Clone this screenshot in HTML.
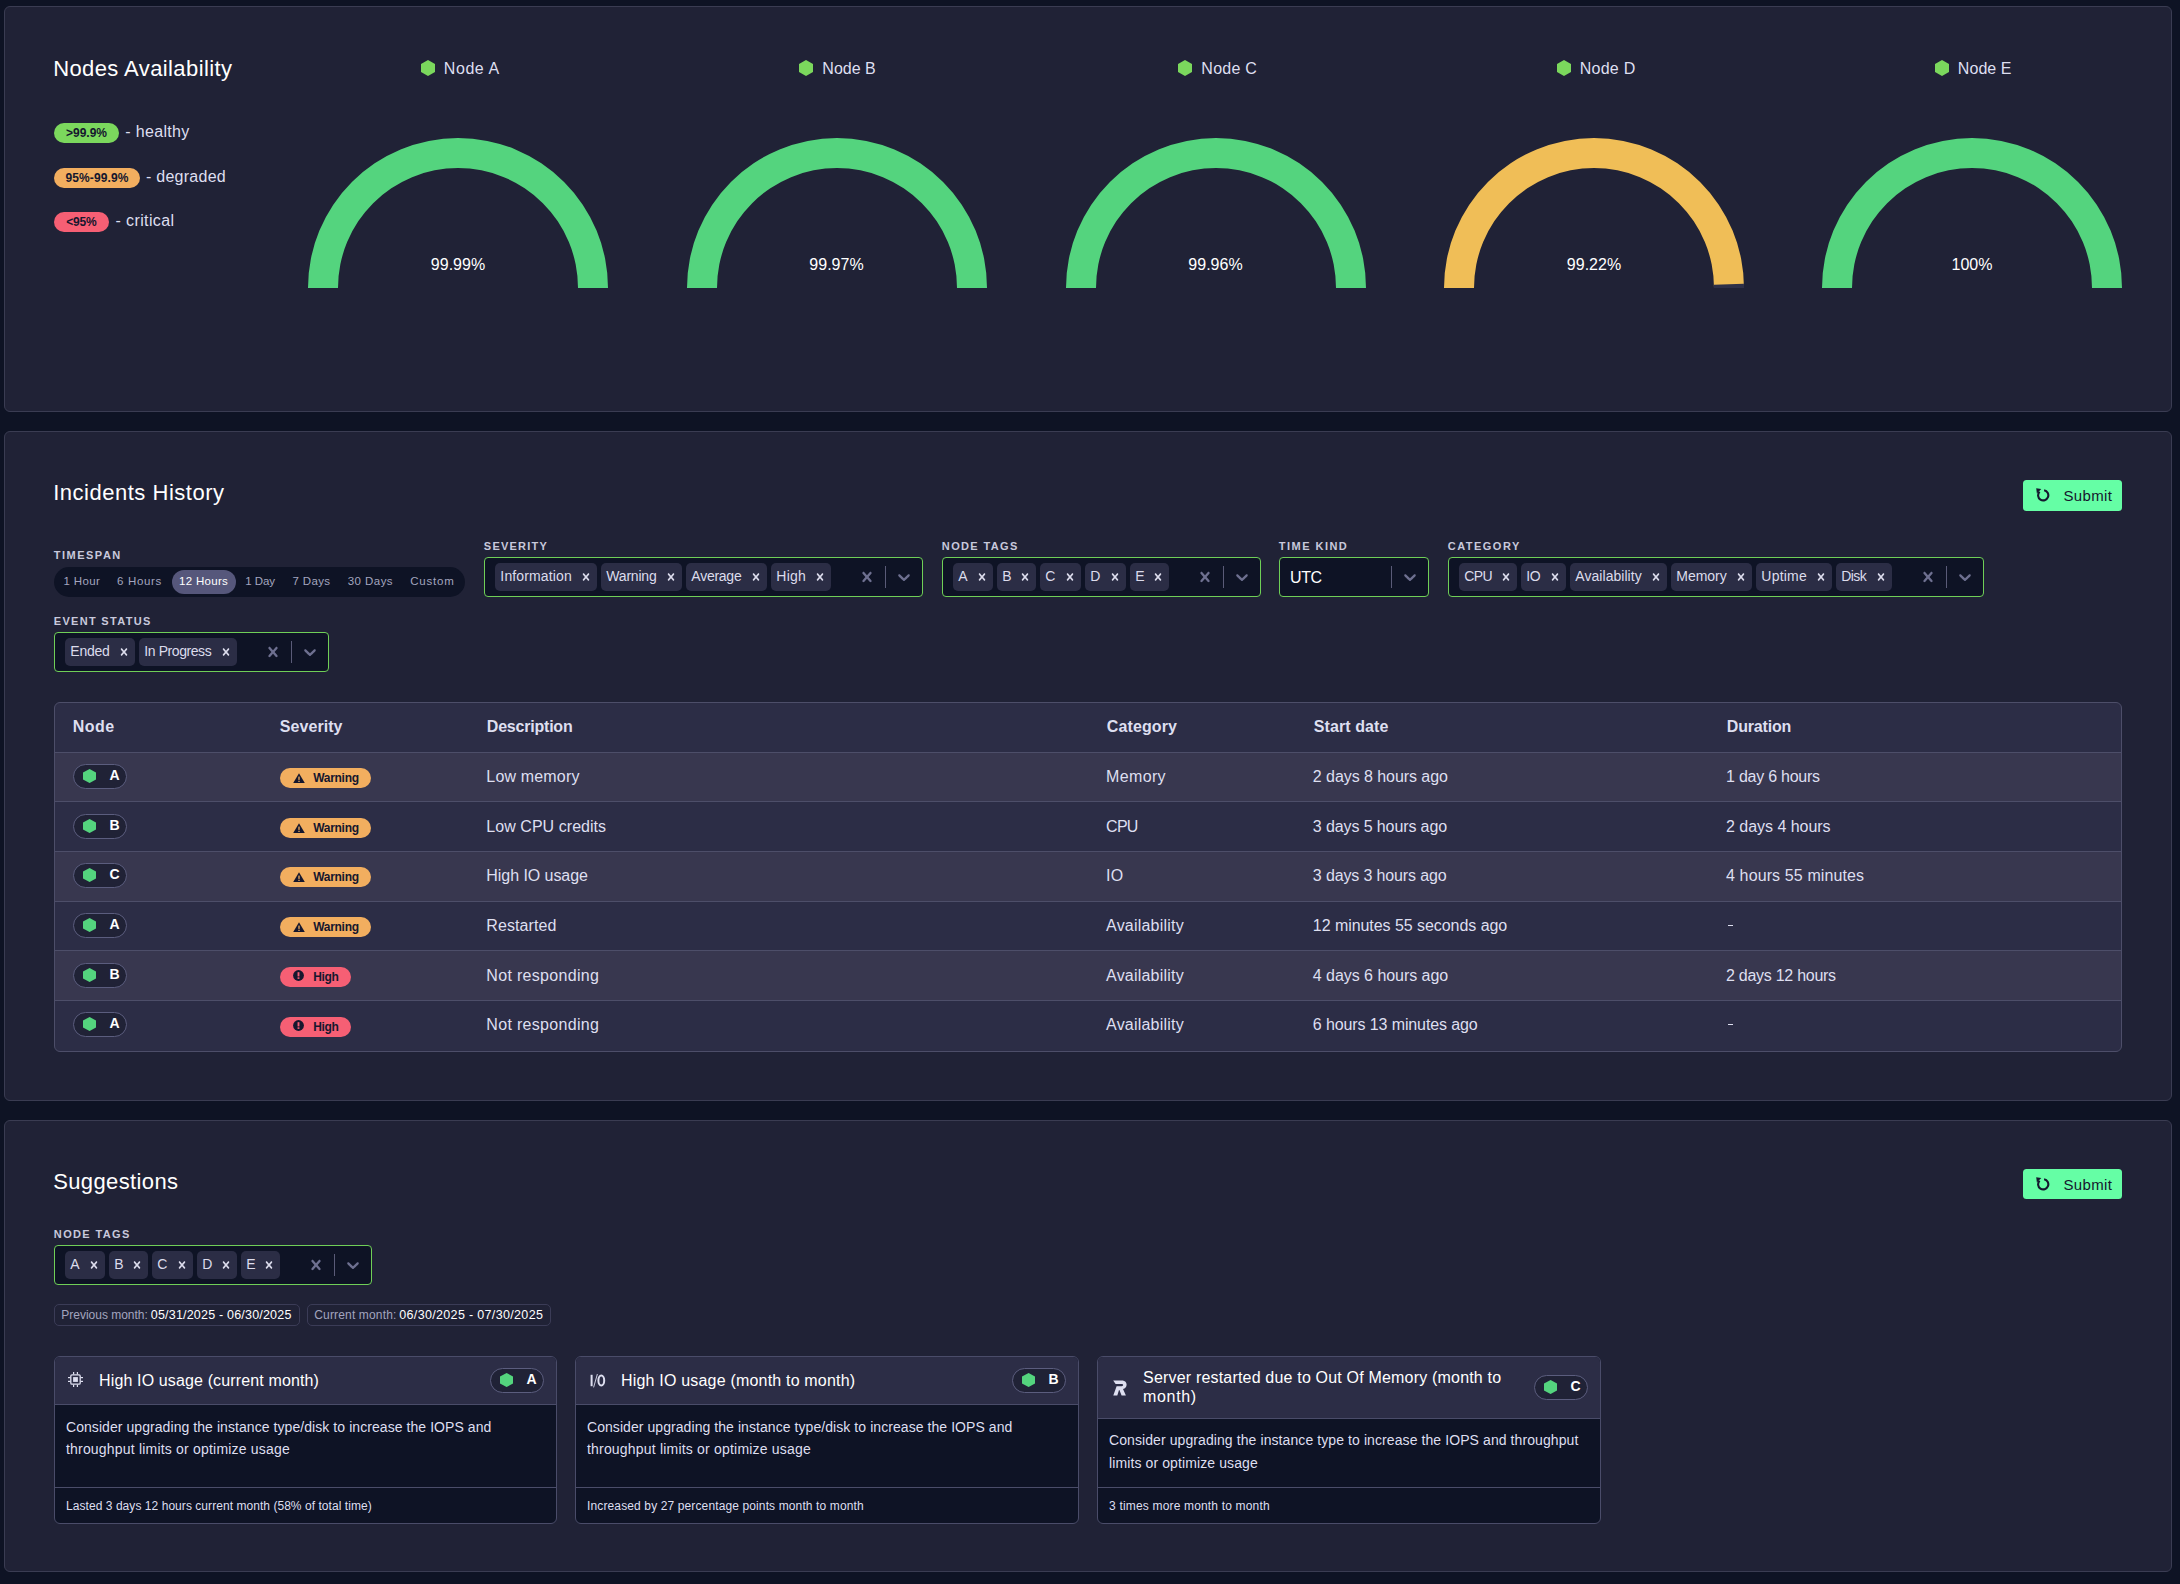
<!DOCTYPE html><html lang="en"><head><meta charset="utf-8"><title>Cluster health</title><style>
html,body{margin:0;padding:0;background:#0e1324;}
body{width:2180px;height:1584px;position:relative;overflow:hidden;font-family:"Liberation Sans", sans-serif;}
.b{position:absolute;display:block;box-sizing:border-box}
.t{position:absolute;white-space:nowrap;line-height:1;margin:0}
</style></head><body>
<section aria-label="Nodes Availability">
<div class="b" style="left:4px;top:6px;width:2168px;height:406px;background:#202236;border:1px solid #3a3c52;border-radius:6px;"></div>
<div class="b" style="left:54px;top:123px;width:65px;height:20px;background:#7bd85d;border-radius:10px;"></div>
<div class="b" style="left:54px;top:167.5px;width:86px;height:20px;background:#f2ae5f;border-radius:10px;"></div>
<div class="b" style="left:54px;top:212px;width:55px;height:20px;background:#f65f74;border-radius:10px;"></div>
<svg class="b" style="left:420.5px;top:59.5px" width="14" height="16" viewBox="0 0 14 16"><polygon points="7.00,0.00 14.00,4.00 14.00,12.00 7.00,16.00 0.00,12.00 0.00,4.00" fill="#7bd85d"/></svg>
<svg class="b" style="left:308px;top:138px" width="300" height="150" viewBox="0 0 300 150"><path d="M0 150 A150 150 0 0 1 300 150 L270 150 A120 120 0 0 0 30 150 Z" fill="#54d47e"/></svg>
<svg class="b" style="left:799.0px;top:59.5px" width="14" height="16" viewBox="0 0 14 16"><polygon points="7.00,0.00 14.00,4.00 14.00,12.00 7.00,16.00 0.00,12.00 0.00,4.00" fill="#7bd85d"/></svg>
<svg class="b" style="left:686.5px;top:138px" width="300" height="150" viewBox="0 0 300 150"><path d="M0 150 A150 150 0 0 1 300 150 L270 150 A120 120 0 0 0 30 150 Z" fill="#54d47e"/></svg>
<svg class="b" style="left:1178.0px;top:59.5px" width="14" height="16" viewBox="0 0 14 16"><polygon points="7.00,0.00 14.00,4.00 14.00,12.00 7.00,16.00 0.00,12.00 0.00,4.00" fill="#7bd85d"/></svg>
<svg class="b" style="left:1065.5px;top:138px" width="300" height="150" viewBox="0 0 300 150"><path d="M0 150 A150 150 0 0 1 300 150 L270 150 A120 120 0 0 0 30 150 Z" fill="#54d47e"/></svg>
<svg class="b" style="left:1556.5px;top:59.5px" width="14" height="16" viewBox="0 0 14 16"><polygon points="7.00,0.00 14.00,4.00 14.00,12.00 7.00,16.00 0.00,12.00 0.00,4.00" fill="#7bd85d"/></svg>
<svg class="b" style="left:1444px;top:138px" width="300" height="150" viewBox="0 0 300 150"><path d="M0 150 A150 150 0 0 1 300 150 L270 150 A120 120 0 0 0 30 150 Z" fill="#f0be57"/><path d="M300 150 L299.94 145.81 L269.95 146.65 L270 150 Z" fill="#2e3048"/></svg>
<svg class="b" style="left:1934.5px;top:59.5px" width="14" height="16" viewBox="0 0 14 16"><polygon points="7.00,0.00 14.00,4.00 14.00,12.00 7.00,16.00 0.00,12.00 0.00,4.00" fill="#7bd85d"/></svg>
<svg class="b" style="left:1822px;top:138px" width="300" height="150" viewBox="0 0 300 150"><path d="M0 150 A150 150 0 0 1 300 150 L270 150 A120 120 0 0 0 30 150 Z" fill="#54d47e"/></svg>
<div class="t" style="top:58.00px;font-size:22px;color:#ffffff;letter-spacing:0.402px;left:53.18px;">Nodes Availability</div>
<div class="t" style="top:127.30px;font-size:12px;color:#15172e;font-weight:700;letter-spacing:0.003px;left:-113.50px;width:400px;text-align:center;"><span>&gt;99.9%</span></div>
<div class="t" style="top:124.00px;font-size:16px;color:#dedff0;letter-spacing:0.338px;left:125.24px;">- healthy</div>
<div class="t" style="top:171.80px;font-size:12px;color:#15172e;font-weight:700;letter-spacing:0.127px;left:-102.94px;width:400px;text-align:center;"><span>95%-99.9%</span></div>
<div class="t" style="top:169.00px;font-size:16px;color:#dedff0;letter-spacing:0.254px;left:146.04px;">- degraded</div>
<div class="t" style="top:216.30px;font-size:12px;color:#15172e;font-weight:700;letter-spacing:-0.157px;left:-118.58px;width:400px;text-align:center;"><span>&lt;95%</span></div>
<div class="t" style="top:213.00px;font-size:16px;color:#dedff0;letter-spacing:0.397px;left:115.44px;">- critical</div>
<div class="t" style="top:61.00px;font-size:16px;color:#dedff0;letter-spacing:0.559px;left:443.84px;">Node A</div>
<div class="t" style="top:257.00px;font-size:16px;color:#ffffff;left:258.00px;width:400px;text-align:center;"><span>99.99%</span></div>
<div class="t" style="top:61.00px;font-size:16px;color:#dedff0;left:822.34px;">Node B</div>
<div class="t" style="top:257.00px;font-size:16px;color:#ffffff;left:636.50px;width:400px;text-align:center;"><span>99.97%</span></div>
<div class="t" style="top:61.00px;font-size:16px;color:#dedff0;letter-spacing:0.246px;left:1201.34px;">Node C</div>
<div class="t" style="top:257.00px;font-size:16px;color:#ffffff;left:1015.50px;width:400px;text-align:center;"><span>99.96%</span></div>
<div class="t" style="top:61.00px;font-size:16px;color:#dedff0;letter-spacing:0.226px;left:1579.84px;">Node D</div>
<div class="t" style="top:257.00px;font-size:16px;color:#ffffff;left:1394.00px;width:400px;text-align:center;"><span>99.22%</span></div>
<div class="t" style="top:61.00px;font-size:16px;color:#dedff0;letter-spacing:0.061px;left:1957.84px;">Node E</div>
<div class="t" style="top:257.00px;font-size:16px;color:#ffffff;left:1772.00px;width:400px;text-align:center;"><span>100%</span></div>
</section>
<section aria-label="Incidents History">
<div class="b" style="left:4px;top:431px;width:2168px;height:670px;background:#202236;border:1px solid #3a3c52;border-radius:6px;"></div>
<div class="b" style="left:2023px;top:480px;width:99px;height:31px;background:#65fea5;border-radius:3.5px;"></div>
<div class="b" style="left:54px;top:567px;width:411px;height:30px;background:#0e1325;border-radius:15px;"></div>
<div class="b" style="left:172px;top:570px;width:64px;height:24px;background:#56577b;border-radius:12px;"></div>
<div class="b" style="left:484px;top:557px;width:439px;height:40px;background:#0e1325;border:1px solid #6fcf57;border-radius:4px;"></div>
<div class="b" style="left:885px;top:566px;width:1px;height:22px;background:#5a5b78;"></div>
<div class="b" style="left:495px;top:563px;width:102px;height:28px;background:#2b2d45;border-radius:5px;"></div>
<div class="b" style="left:601px;top:563px;width:81px;height:28px;background:#2b2d45;border-radius:5px;"></div>
<div class="b" style="left:686px;top:563px;width:81px;height:28px;background:#2b2d45;border-radius:5px;"></div>
<div class="b" style="left:771px;top:563px;width:60px;height:28px;background:#2b2d45;border-radius:5px;"></div>
<div class="b" style="left:942px;top:557px;width:319px;height:40px;background:#0e1325;border:1px solid #6fcf57;border-radius:4px;"></div>
<div class="b" style="left:1223px;top:566px;width:1px;height:22px;background:#5a5b78;"></div>
<div class="b" style="left:953px;top:563px;width:40px;height:28px;background:#2b2d45;border-radius:5px;"></div>
<div class="b" style="left:997px;top:563px;width:39px;height:28px;background:#2b2d45;border-radius:5px;"></div>
<div class="b" style="left:1040px;top:563px;width:41px;height:28px;background:#2b2d45;border-radius:5px;"></div>
<div class="b" style="left:1085px;top:563px;width:41px;height:28px;background:#2b2d45;border-radius:5px;"></div>
<div class="b" style="left:1130px;top:563px;width:39px;height:28px;background:#2b2d45;border-radius:5px;"></div>
<div class="b" style="left:1279px;top:557px;width:150px;height:40px;background:#0e1325;border:1px solid #6fcf57;border-radius:4px;"></div>
<div class="b" style="left:1391px;top:566px;width:1px;height:22px;background:#5a5b78;"></div>
<div class="b" style="left:1448px;top:557px;width:536px;height:40px;background:#0e1325;border:1px solid #6fcf57;border-radius:4px;"></div>
<div class="b" style="left:1946px;top:566px;width:1px;height:22px;background:#5a5b78;"></div>
<div class="b" style="left:1459px;top:563px;width:58px;height:28px;background:#2b2d45;border-radius:5px;"></div>
<div class="b" style="left:1521px;top:563px;width:45px;height:28px;background:#2b2d45;border-radius:5px;"></div>
<div class="b" style="left:1570px;top:563px;width:97px;height:28px;background:#2b2d45;border-radius:5px;"></div>
<div class="b" style="left:1671px;top:563px;width:81px;height:28px;background:#2b2d45;border-radius:5px;"></div>
<div class="b" style="left:1756px;top:563px;width:76px;height:28px;background:#2b2d45;border-radius:5px;"></div>
<div class="b" style="left:1836px;top:563px;width:56px;height:28px;background:#2b2d45;border-radius:5px;"></div>
<div class="b" style="left:54px;top:632px;width:275px;height:40px;background:#0e1325;border:1px solid #6fcf57;border-radius:4px;"></div>
<div class="b" style="left:291px;top:641px;width:1px;height:22px;background:#5a5b78;"></div>
<div class="b" style="left:65px;top:638px;width:70px;height:28px;background:#2b2d45;border-radius:5px;"></div>
<div class="b" style="left:139px;top:638px;width:98px;height:28px;background:#2b2d45;border-radius:5px;"></div>
<div class="b" style="left:54px;top:702px;width:2068px;height:350px;background:#2c2d46;border:1px solid #4d4e69;border-radius:6px;box-sizing:border-box;"></div>
<div class="b" style="left:55px;top:753px;width:2066px;height:48px;background:#38374f;"></div>
<div class="b" style="left:55px;top:852px;width:2066px;height:49px;background:#38374f;"></div>
<div class="b" style="left:55px;top:951px;width:2066px;height:49px;background:#38374f;"></div>
<div class="b" style="left:55px;top:752px;width:2066px;height:1px;background:#4d4e69;"></div>
<div class="b" style="left:55px;top:801px;width:2066px;height:1px;background:#4d4e69;"></div>
<div class="b" style="left:55px;top:851px;width:2066px;height:1px;background:#4d4e69;"></div>
<div class="b" style="left:55px;top:901px;width:2066px;height:1px;background:#4d4e69;"></div>
<div class="b" style="left:55px;top:950px;width:2066px;height:1px;background:#4d4e69;"></div>
<div class="b" style="left:55px;top:1000px;width:2066px;height:1px;background:#4d4e69;"></div>
<div class="b" style="left:73px;top:764px;width:54px;height:25px;background:#202236;border:1px solid #5b5d7e;border-radius:12.5px;"></div>
<div class="b" style="left:280px;top:768px;width:91px;height:20px;background:#f2ae5f;border-radius:10px;"></div>
<div class="b" style="left:73px;top:814px;width:54px;height:25px;background:#202236;border:1px solid #5b5d7e;border-radius:12.5px;"></div>
<div class="b" style="left:280px;top:818px;width:91px;height:20px;background:#f2ae5f;border-radius:10px;"></div>
<div class="b" style="left:73px;top:863px;width:54px;height:25px;background:#202236;border:1px solid #5b5d7e;border-radius:12.5px;"></div>
<div class="b" style="left:280px;top:867px;width:91px;height:20px;background:#f2ae5f;border-radius:10px;"></div>
<div class="b" style="left:73px;top:913px;width:54px;height:25px;background:#202236;border:1px solid #5b5d7e;border-radius:12.5px;"></div>
<div class="b" style="left:280px;top:917px;width:91px;height:20px;background:#f2ae5f;border-radius:10px;"></div>
<div class="b" style="left:1727.5px;top:924.5px;width:5px;height:1.6px;background:#dedff0;"></div>
<div class="b" style="left:73px;top:963px;width:54px;height:25px;background:#202236;border:1px solid #5b5d7e;border-radius:12.5px;"></div>
<div class="b" style="left:280px;top:967px;width:71px;height:20px;background:#f65f74;border-radius:10px;"></div>
<div class="b" style="left:73px;top:1012px;width:54px;height:25px;background:#202236;border:1px solid #5b5d7e;border-radius:12.5px;"></div>
<div class="b" style="left:280px;top:1016.5px;width:71px;height:20px;background:#f65f74;border-radius:10px;"></div>
<div class="b" style="left:1727.5px;top:1023.5px;width:5px;height:1.6px;background:#dedff0;"></div>
<svg class="b" style="left:2036px;top:488.2px" width="14" height="14" viewBox="0 0 14 14"><path d="M8.09 2.28 A5.1 5.1 0 1 1 3.6 3.7" fill="none" stroke="#15172e" stroke-width="2.1"/><path d="M0.2 0.3 L5.3 0.9 L0.9 5.5 Z" fill="#15172e"/></svg>
<svg class="b" style="left:894px;top:567.0px" width="20" height="20" viewBox="0 0 20 20"><path d="M4.516 7.548c0.436-0.446 1.043-0.481 1.576 0l3.908 3.747 3.908-3.747c0.533-0.481 1.141-0.446 1.574 0 0.436 0.445 0.408 1.197 0 1.615-0.406 0.418-4.695 4.502-4.695 4.502-0.217 0.223-0.502 0.335-0.787 0.335s-0.57-0.112-0.789-0.335c0 0-4.287-4.084-4.695-4.502s-0.436-1.17 0-1.615z" fill="#6e7090"/></svg>
<svg class="b" style="left:857px;top:567.0px" width="20" height="20" viewBox="0 0 20 20"><path d="M14.348 14.849c-0.469 0.469-1.229 0.469-1.697 0l-2.651-3.030-2.651 3.029c-0.469 0.469-1.229 0.469-1.697 0-0.469-0.469-0.469-1.229 0-1.697l2.758-3.15-2.759-3.152c-0.469-0.469-0.469-1.228 0-1.697s1.228-0.469 1.697 0l2.652 3.031 2.651-3.031c0.469-0.469 1.228-0.469 1.697 0s0.469 1.229 0 1.697l-2.758 3.152 2.758 3.15c0.469 0.469 0.469 1.229 0 1.698z" fill="#6e7090"/></svg>
<svg class="b" style="left:579px;top:570.0px" width="14" height="14" viewBox="0 0 20 20"><path d="M14.348 14.849c-0.469 0.469-1.229 0.469-1.697 0l-2.651-3.030-2.651 3.029c-0.469 0.469-1.229 0.469-1.697 0-0.469-0.469-0.469-1.229 0-1.697l2.758-3.15-2.759-3.152c-0.469-0.469-0.469-1.228 0-1.697s1.228-0.469 1.697 0l2.652 3.031 2.651-3.031c0.469-0.469 1.228-0.469 1.697 0s0.469 1.229 0 1.697l-2.758 3.152 2.758 3.15c0.469 0.469 0.469 1.229 0 1.698z" fill="#dcdcec"/></svg>
<svg class="b" style="left:664px;top:570.0px" width="14" height="14" viewBox="0 0 20 20"><path d="M14.348 14.849c-0.469 0.469-1.229 0.469-1.697 0l-2.651-3.030-2.651 3.029c-0.469 0.469-1.229 0.469-1.697 0-0.469-0.469-0.469-1.229 0-1.697l2.758-3.15-2.759-3.152c-0.469-0.469-0.469-1.228 0-1.697s1.228-0.469 1.697 0l2.652 3.031 2.651-3.031c0.469-0.469 1.228-0.469 1.697 0s0.469 1.229 0 1.697l-2.758 3.152 2.758 3.15c0.469 0.469 0.469 1.229 0 1.698z" fill="#dcdcec"/></svg>
<svg class="b" style="left:749px;top:570.0px" width="14" height="14" viewBox="0 0 20 20"><path d="M14.348 14.849c-0.469 0.469-1.229 0.469-1.697 0l-2.651-3.030-2.651 3.029c-0.469 0.469-1.229 0.469-1.697 0-0.469-0.469-0.469-1.229 0-1.697l2.758-3.15-2.759-3.152c-0.469-0.469-0.469-1.228 0-1.697s1.228-0.469 1.697 0l2.652 3.031 2.651-3.031c0.469-0.469 1.228-0.469 1.697 0s0.469 1.229 0 1.697l-2.758 3.152 2.758 3.15c0.469 0.469 0.469 1.229 0 1.698z" fill="#dcdcec"/></svg>
<svg class="b" style="left:813px;top:570.0px" width="14" height="14" viewBox="0 0 20 20"><path d="M14.348 14.849c-0.469 0.469-1.229 0.469-1.697 0l-2.651-3.030-2.651 3.029c-0.469 0.469-1.229 0.469-1.697 0-0.469-0.469-0.469-1.229 0-1.697l2.758-3.15-2.759-3.152c-0.469-0.469-0.469-1.228 0-1.697s1.228-0.469 1.697 0l2.652 3.031 2.651-3.031c0.469-0.469 1.228-0.469 1.697 0s0.469 1.229 0 1.697l-2.758 3.152 2.758 3.15c0.469 0.469 0.469 1.229 0 1.698z" fill="#dcdcec"/></svg>
<svg class="b" style="left:1232px;top:567.0px" width="20" height="20" viewBox="0 0 20 20"><path d="M4.516 7.548c0.436-0.446 1.043-0.481 1.576 0l3.908 3.747 3.908-3.747c0.533-0.481 1.141-0.446 1.574 0 0.436 0.445 0.408 1.197 0 1.615-0.406 0.418-4.695 4.502-4.695 4.502-0.217 0.223-0.502 0.335-0.787 0.335s-0.57-0.112-0.789-0.335c0 0-4.287-4.084-4.695-4.502s-0.436-1.17 0-1.615z" fill="#6e7090"/></svg>
<svg class="b" style="left:1195px;top:567.0px" width="20" height="20" viewBox="0 0 20 20"><path d="M14.348 14.849c-0.469 0.469-1.229 0.469-1.697 0l-2.651-3.030-2.651 3.029c-0.469 0.469-1.229 0.469-1.697 0-0.469-0.469-0.469-1.229 0-1.697l2.758-3.15-2.759-3.152c-0.469-0.469-0.469-1.228 0-1.697s1.228-0.469 1.697 0l2.652 3.031 2.651-3.031c0.469-0.469 1.228-0.469 1.697 0s0.469 1.229 0 1.697l-2.758 3.152 2.758 3.15c0.469 0.469 0.469 1.229 0 1.698z" fill="#6e7090"/></svg>
<svg class="b" style="left:975px;top:570.0px" width="14" height="14" viewBox="0 0 20 20"><path d="M14.348 14.849c-0.469 0.469-1.229 0.469-1.697 0l-2.651-3.030-2.651 3.029c-0.469 0.469-1.229 0.469-1.697 0-0.469-0.469-0.469-1.229 0-1.697l2.758-3.15-2.759-3.152c-0.469-0.469-0.469-1.228 0-1.697s1.228-0.469 1.697 0l2.652 3.031 2.651-3.031c0.469-0.469 1.228-0.469 1.697 0s0.469 1.229 0 1.697l-2.758 3.152 2.758 3.15c0.469 0.469 0.469 1.229 0 1.698z" fill="#dcdcec"/></svg>
<svg class="b" style="left:1018px;top:570.0px" width="14" height="14" viewBox="0 0 20 20"><path d="M14.348 14.849c-0.469 0.469-1.229 0.469-1.697 0l-2.651-3.030-2.651 3.029c-0.469 0.469-1.229 0.469-1.697 0-0.469-0.469-0.469-1.229 0-1.697l2.758-3.15-2.759-3.152c-0.469-0.469-0.469-1.228 0-1.697s1.228-0.469 1.697 0l2.652 3.031 2.651-3.031c0.469-0.469 1.228-0.469 1.697 0s0.469 1.229 0 1.697l-2.758 3.152 2.758 3.15c0.469 0.469 0.469 1.229 0 1.698z" fill="#dcdcec"/></svg>
<svg class="b" style="left:1063px;top:570.0px" width="14" height="14" viewBox="0 0 20 20"><path d="M14.348 14.849c-0.469 0.469-1.229 0.469-1.697 0l-2.651-3.030-2.651 3.029c-0.469 0.469-1.229 0.469-1.697 0-0.469-0.469-0.469-1.229 0-1.697l2.758-3.15-2.759-3.152c-0.469-0.469-0.469-1.228 0-1.697s1.228-0.469 1.697 0l2.652 3.031 2.651-3.031c0.469-0.469 1.228-0.469 1.697 0s0.469 1.229 0 1.697l-2.758 3.152 2.758 3.15c0.469 0.469 0.469 1.229 0 1.698z" fill="#dcdcec"/></svg>
<svg class="b" style="left:1108px;top:570.0px" width="14" height="14" viewBox="0 0 20 20"><path d="M14.348 14.849c-0.469 0.469-1.229 0.469-1.697 0l-2.651-3.030-2.651 3.029c-0.469 0.469-1.229 0.469-1.697 0-0.469-0.469-0.469-1.229 0-1.697l2.758-3.15-2.759-3.152c-0.469-0.469-0.469-1.228 0-1.697s1.228-0.469 1.697 0l2.652 3.031 2.651-3.031c0.469-0.469 1.228-0.469 1.697 0s0.469 1.229 0 1.697l-2.758 3.152 2.758 3.15c0.469 0.469 0.469 1.229 0 1.698z" fill="#dcdcec"/></svg>
<svg class="b" style="left:1151px;top:570.0px" width="14" height="14" viewBox="0 0 20 20"><path d="M14.348 14.849c-0.469 0.469-1.229 0.469-1.697 0l-2.651-3.030-2.651 3.029c-0.469 0.469-1.229 0.469-1.697 0-0.469-0.469-0.469-1.229 0-1.697l2.758-3.15-2.759-3.152c-0.469-0.469-0.469-1.228 0-1.697s1.228-0.469 1.697 0l2.652 3.031 2.651-3.031c0.469-0.469 1.228-0.469 1.697 0s0.469 1.229 0 1.697l-2.758 3.152 2.758 3.15c0.469 0.469 0.469 1.229 0 1.698z" fill="#dcdcec"/></svg>
<svg class="b" style="left:1400px;top:567.0px" width="20" height="20" viewBox="0 0 20 20"><path d="M4.516 7.548c0.436-0.446 1.043-0.481 1.576 0l3.908 3.747 3.908-3.747c0.533-0.481 1.141-0.446 1.574 0 0.436 0.445 0.408 1.197 0 1.615-0.406 0.418-4.695 4.502-4.695 4.502-0.217 0.223-0.502 0.335-0.787 0.335s-0.57-0.112-0.789-0.335c0 0-4.287-4.084-4.695-4.502s-0.436-1.17 0-1.615z" fill="#6e7090"/></svg>
<svg class="b" style="left:1955px;top:567.0px" width="20" height="20" viewBox="0 0 20 20"><path d="M4.516 7.548c0.436-0.446 1.043-0.481 1.576 0l3.908 3.747 3.908-3.747c0.533-0.481 1.141-0.446 1.574 0 0.436 0.445 0.408 1.197 0 1.615-0.406 0.418-4.695 4.502-4.695 4.502-0.217 0.223-0.502 0.335-0.787 0.335s-0.57-0.112-0.789-0.335c0 0-4.287-4.084-4.695-4.502s-0.436-1.17 0-1.615z" fill="#6e7090"/></svg>
<svg class="b" style="left:1918px;top:567.0px" width="20" height="20" viewBox="0 0 20 20"><path d="M14.348 14.849c-0.469 0.469-1.229 0.469-1.697 0l-2.651-3.030-2.651 3.029c-0.469 0.469-1.229 0.469-1.697 0-0.469-0.469-0.469-1.229 0-1.697l2.758-3.15-2.759-3.152c-0.469-0.469-0.469-1.228 0-1.697s1.228-0.469 1.697 0l2.652 3.031 2.651-3.031c0.469-0.469 1.228-0.469 1.697 0s0.469 1.229 0 1.697l-2.758 3.152 2.758 3.15c0.469 0.469 0.469 1.229 0 1.698z" fill="#6e7090"/></svg>
<svg class="b" style="left:1499px;top:570.0px" width="14" height="14" viewBox="0 0 20 20"><path d="M14.348 14.849c-0.469 0.469-1.229 0.469-1.697 0l-2.651-3.030-2.651 3.029c-0.469 0.469-1.229 0.469-1.697 0-0.469-0.469-0.469-1.229 0-1.697l2.758-3.15-2.759-3.152c-0.469-0.469-0.469-1.228 0-1.697s1.228-0.469 1.697 0l2.652 3.031 2.651-3.031c0.469-0.469 1.228-0.469 1.697 0s0.469 1.229 0 1.697l-2.758 3.152 2.758 3.15c0.469 0.469 0.469 1.229 0 1.698z" fill="#dcdcec"/></svg>
<svg class="b" style="left:1548px;top:570.0px" width="14" height="14" viewBox="0 0 20 20"><path d="M14.348 14.849c-0.469 0.469-1.229 0.469-1.697 0l-2.651-3.030-2.651 3.029c-0.469 0.469-1.229 0.469-1.697 0-0.469-0.469-0.469-1.229 0-1.697l2.758-3.15-2.759-3.152c-0.469-0.469-0.469-1.228 0-1.697s1.228-0.469 1.697 0l2.652 3.031 2.651-3.031c0.469-0.469 1.228-0.469 1.697 0s0.469 1.229 0 1.697l-2.758 3.152 2.758 3.15c0.469 0.469 0.469 1.229 0 1.698z" fill="#dcdcec"/></svg>
<svg class="b" style="left:1649px;top:570.0px" width="14" height="14" viewBox="0 0 20 20"><path d="M14.348 14.849c-0.469 0.469-1.229 0.469-1.697 0l-2.651-3.030-2.651 3.029c-0.469 0.469-1.229 0.469-1.697 0-0.469-0.469-0.469-1.229 0-1.697l2.758-3.15-2.759-3.152c-0.469-0.469-0.469-1.228 0-1.697s1.228-0.469 1.697 0l2.652 3.031 2.651-3.031c0.469-0.469 1.228-0.469 1.697 0s0.469 1.229 0 1.697l-2.758 3.152 2.758 3.15c0.469 0.469 0.469 1.229 0 1.698z" fill="#dcdcec"/></svg>
<svg class="b" style="left:1734px;top:570.0px" width="14" height="14" viewBox="0 0 20 20"><path d="M14.348 14.849c-0.469 0.469-1.229 0.469-1.697 0l-2.651-3.030-2.651 3.029c-0.469 0.469-1.229 0.469-1.697 0-0.469-0.469-0.469-1.229 0-1.697l2.758-3.15-2.759-3.152c-0.469-0.469-0.469-1.228 0-1.697s1.228-0.469 1.697 0l2.652 3.031 2.651-3.031c0.469-0.469 1.228-0.469 1.697 0s0.469 1.229 0 1.697l-2.758 3.152 2.758 3.15c0.469 0.469 0.469 1.229 0 1.698z" fill="#dcdcec"/></svg>
<svg class="b" style="left:1814px;top:570.0px" width="14" height="14" viewBox="0 0 20 20"><path d="M14.348 14.849c-0.469 0.469-1.229 0.469-1.697 0l-2.651-3.030-2.651 3.029c-0.469 0.469-1.229 0.469-1.697 0-0.469-0.469-0.469-1.229 0-1.697l2.758-3.15-2.759-3.152c-0.469-0.469-0.469-1.228 0-1.697s1.228-0.469 1.697 0l2.652 3.031 2.651-3.031c0.469-0.469 1.228-0.469 1.697 0s0.469 1.229 0 1.697l-2.758 3.152 2.758 3.15c0.469 0.469 0.469 1.229 0 1.698z" fill="#dcdcec"/></svg>
<svg class="b" style="left:1874px;top:570.0px" width="14" height="14" viewBox="0 0 20 20"><path d="M14.348 14.849c-0.469 0.469-1.229 0.469-1.697 0l-2.651-3.030-2.651 3.029c-0.469 0.469-1.229 0.469-1.697 0-0.469-0.469-0.469-1.229 0-1.697l2.758-3.15-2.759-3.152c-0.469-0.469-0.469-1.228 0-1.697s1.228-0.469 1.697 0l2.652 3.031 2.651-3.031c0.469-0.469 1.228-0.469 1.697 0s0.469 1.229 0 1.697l-2.758 3.152 2.758 3.15c0.469 0.469 0.469 1.229 0 1.698z" fill="#dcdcec"/></svg>
<svg class="b" style="left:300px;top:642.0px" width="20" height="20" viewBox="0 0 20 20"><path d="M4.516 7.548c0.436-0.446 1.043-0.481 1.576 0l3.908 3.747 3.908-3.747c0.533-0.481 1.141-0.446 1.574 0 0.436 0.445 0.408 1.197 0 1.615-0.406 0.418-4.695 4.502-4.695 4.502-0.217 0.223-0.502 0.335-0.787 0.335s-0.57-0.112-0.789-0.335c0 0-4.287-4.084-4.695-4.502s-0.436-1.17 0-1.615z" fill="#6e7090"/></svg>
<svg class="b" style="left:263px;top:642.0px" width="20" height="20" viewBox="0 0 20 20"><path d="M14.348 14.849c-0.469 0.469-1.229 0.469-1.697 0l-2.651-3.030-2.651 3.029c-0.469 0.469-1.229 0.469-1.697 0-0.469-0.469-0.469-1.229 0-1.697l2.758-3.15-2.759-3.152c-0.469-0.469-0.469-1.228 0-1.697s1.228-0.469 1.697 0l2.652 3.031 2.651-3.031c0.469-0.469 1.228-0.469 1.697 0s0.469 1.229 0 1.697l-2.758 3.152 2.758 3.15c0.469 0.469 0.469 1.229 0 1.698z" fill="#6e7090"/></svg>
<svg class="b" style="left:117px;top:645.0px" width="14" height="14" viewBox="0 0 20 20"><path d="M14.348 14.849c-0.469 0.469-1.229 0.469-1.697 0l-2.651-3.030-2.651 3.029c-0.469 0.469-1.229 0.469-1.697 0-0.469-0.469-0.469-1.229 0-1.697l2.758-3.15-2.759-3.152c-0.469-0.469-0.469-1.228 0-1.697s1.228-0.469 1.697 0l2.652 3.031 2.651-3.031c0.469-0.469 1.228-0.469 1.697 0s0.469 1.229 0 1.697l-2.758 3.152 2.758 3.15c0.469 0.469 0.469 1.229 0 1.698z" fill="#dcdcec"/></svg>
<svg class="b" style="left:219px;top:645.0px" width="14" height="14" viewBox="0 0 20 20"><path d="M14.348 14.849c-0.469 0.469-1.229 0.469-1.697 0l-2.651-3.030-2.651 3.029c-0.469 0.469-1.229 0.469-1.697 0-0.469-0.469-0.469-1.229 0-1.697l2.758-3.15-2.759-3.152c-0.469-0.469-0.469-1.228 0-1.697s1.228-0.469 1.697 0l2.652 3.031 2.651-3.031c0.469-0.469 1.228-0.469 1.697 0s0.469 1.229 0 1.697l-2.758 3.152 2.758 3.15c0.469 0.469 0.469 1.229 0 1.698z" fill="#dcdcec"/></svg>
<svg class="b" style="left:82.9px;top:768.5px" width="13.2" height="14" viewBox="0 0 13.2 14"><polygon points="6.60,0.00 13.20,3.50 13.20,10.50 6.60,14.00 0.00,10.50 0.00,3.50" fill="#54d47e"/></svg>
<svg class="b" style="left:293px;top:773px" width="12" height="10.5" viewBox="0 0 12 10.5"><path d="M6 0.3 L11.8 10 L0.2 10 Z" fill="#15172e"/><rect x="5.35" y="3.6" width="1.3" height="3.3" fill="#f2ae5f"/><rect x="5.35" y="7.7" width="1.3" height="1.3" fill="#f2ae5f"/></svg>
<svg class="b" style="left:82.9px;top:818.5px" width="13.2" height="14" viewBox="0 0 13.2 14"><polygon points="6.60,0.00 13.20,3.50 13.20,10.50 6.60,14.00 0.00,10.50 0.00,3.50" fill="#54d47e"/></svg>
<svg class="b" style="left:293px;top:823px" width="12" height="10.5" viewBox="0 0 12 10.5"><path d="M6 0.3 L11.8 10 L0.2 10 Z" fill="#15172e"/><rect x="5.35" y="3.6" width="1.3" height="3.3" fill="#f2ae5f"/><rect x="5.35" y="7.7" width="1.3" height="1.3" fill="#f2ae5f"/></svg>
<svg class="b" style="left:82.9px;top:867.5px" width="13.2" height="14" viewBox="0 0 13.2 14"><polygon points="6.60,0.00 13.20,3.50 13.20,10.50 6.60,14.00 0.00,10.50 0.00,3.50" fill="#54d47e"/></svg>
<svg class="b" style="left:293px;top:872px" width="12" height="10.5" viewBox="0 0 12 10.5"><path d="M6 0.3 L11.8 10 L0.2 10 Z" fill="#15172e"/><rect x="5.35" y="3.6" width="1.3" height="3.3" fill="#f2ae5f"/><rect x="5.35" y="7.7" width="1.3" height="1.3" fill="#f2ae5f"/></svg>
<svg class="b" style="left:82.9px;top:917.5px" width="13.2" height="14" viewBox="0 0 13.2 14"><polygon points="6.60,0.00 13.20,3.50 13.20,10.50 6.60,14.00 0.00,10.50 0.00,3.50" fill="#54d47e"/></svg>
<svg class="b" style="left:293px;top:922px" width="12" height="10.5" viewBox="0 0 12 10.5"><path d="M6 0.3 L11.8 10 L0.2 10 Z" fill="#15172e"/><rect x="5.35" y="3.6" width="1.3" height="3.3" fill="#f2ae5f"/><rect x="5.35" y="7.7" width="1.3" height="1.3" fill="#f2ae5f"/></svg>
<svg class="b" style="left:82.9px;top:967.5px" width="13.2" height="14" viewBox="0 0 13.2 14"><polygon points="6.60,0.00 13.20,3.50 13.20,10.50 6.60,14.00 0.00,10.50 0.00,3.50" fill="#54d47e"/></svg>
<svg class="b" style="left:293.1px;top:970.3px" width="11" height="11" viewBox="0 0 11 11"><circle cx="5.5" cy="5.5" r="5.4" fill="#15172e"/><rect x="4.55" y="2.2" width="1.9" height="4.2" fill="#f65f74"/><rect x="4.55" y="7.3" width="1.9" height="1.6" fill="#f65f74"/></svg>
<svg class="b" style="left:82.9px;top:1016.5px" width="13.2" height="14" viewBox="0 0 13.2 14"><polygon points="6.60,0.00 13.20,3.50 13.20,10.50 6.60,14.00 0.00,10.50 0.00,3.50" fill="#54d47e"/></svg>
<svg class="b" style="left:293.1px;top:1019.8px" width="11" height="11" viewBox="0 0 11 11"><circle cx="5.5" cy="5.5" r="5.4" fill="#15172e"/><rect x="4.55" y="2.2" width="1.9" height="4.2" fill="#f65f74"/><rect x="4.55" y="7.3" width="1.9" height="1.6" fill="#f65f74"/></svg>
<div class="t" style="top:482.00px;font-size:22px;color:#ffffff;letter-spacing:0.515px;left:53.18px;">Incidents History</div>
<div class="t" style="top:488.00px;font-size:15px;color:#15172e;letter-spacing:0.353px;left:2063.40px;">Submit</div>
<div class="t" style="top:550.00px;font-size:11px;color:#c8c9dc;font-weight:700;letter-spacing:1.486px;left:53.84px;">TIMESPAN</div>
<div class="t" style="top:576.00px;font-size:11.5px;color:#a3a5bf;letter-spacing:0.353px;left:63.51px;">1 Hour</div>
<div class="t" style="top:576.00px;font-size:11.5px;color:#a3a5bf;letter-spacing:0.669px;left:117.01px;">6 Hours</div>
<div class="t" style="top:576.00px;font-size:11.5px;color:#ffffff;letter-spacing:0.303px;left:179.01px;">12 Hours</div>
<div class="t" style="top:576.00px;font-size:11.5px;color:#a3a5bf;letter-spacing:-0.038px;left:245.21px;">1 Day</div>
<div class="t" style="top:576.00px;font-size:11.5px;color:#a3a5bf;letter-spacing:0.320px;left:292.61px;">7 Days</div>
<div class="t" style="top:576.00px;font-size:11.5px;color:#a3a5bf;letter-spacing:0.451px;left:347.71px;">30 Days</div>
<div class="t" style="top:576.00px;font-size:11.5px;color:#a3a5bf;letter-spacing:0.814px;left:410.21px;">Custom</div>
<div class="t" style="top:541.00px;font-size:11px;color:#c8c9dc;font-weight:700;letter-spacing:1.218px;left:483.84px;">SEVERITY</div>
<div class="t" style="top:569.30px;font-size:14px;color:#dcdcec;letter-spacing:0.127px;left:500.36px;">Information</div>
<div class="t" style="top:569.30px;font-size:14px;color:#dcdcec;letter-spacing:-0.217px;left:606.36px;">Warning</div>
<div class="t" style="top:569.30px;font-size:14px;color:#dcdcec;letter-spacing:-0.264px;left:691.36px;">Average</div>
<div class="t" style="top:569.30px;font-size:14px;color:#dcdcec;letter-spacing:0.174px;left:776.36px;">High</div>
<div class="t" style="top:541.00px;font-size:11px;color:#c8c9dc;font-weight:700;letter-spacing:1.356px;left:941.84px;">NODE TAGS</div>
<div class="t" style="top:569.30px;font-size:14px;color:#dcdcec;left:958.36px;">A</div>
<div class="t" style="top:569.30px;font-size:14px;color:#dcdcec;left:1002.36px;">B</div>
<div class="t" style="top:569.30px;font-size:14px;color:#dcdcec;left:1045.36px;">C</div>
<div class="t" style="top:569.30px;font-size:14px;color:#dcdcec;left:1090.36px;">D</div>
<div class="t" style="top:569.30px;font-size:14px;color:#dcdcec;left:1135.36px;">E</div>
<div class="t" style="top:541.00px;font-size:11px;color:#c8c9dc;font-weight:700;letter-spacing:1.462px;left:1278.84px;">TIME KIND</div>
<div class="t" style="top:569.50px;font-size:16px;color:#ffffff;letter-spacing:-0.405px;left:1290.04px;">UTC</div>
<div class="t" style="top:541.00px;font-size:11px;color:#c8c9dc;font-weight:700;letter-spacing:1.472px;left:1447.84px;">CATEGORY</div>
<div class="t" style="top:569.30px;font-size:14px;color:#dcdcec;letter-spacing:-0.700px;left:1464.36px;">CPU</div>
<div class="t" style="top:569.30px;font-size:14px;color:#dcdcec;letter-spacing:-0.461px;left:1526.36px;">IO</div>
<div class="t" style="top:569.30px;font-size:14px;color:#dcdcec;letter-spacing:0.039px;left:1575.36px;">Availability</div>
<div class="t" style="top:569.30px;font-size:14px;color:#dcdcec;letter-spacing:-0.048px;left:1676.36px;">Memory</div>
<div class="t" style="top:569.30px;font-size:14px;color:#dcdcec;letter-spacing:0.192px;left:1761.36px;">Uptime</div>
<div class="t" style="top:569.30px;font-size:14px;color:#dcdcec;letter-spacing:-0.638px;left:1841.36px;">Disk</div>
<div class="t" style="top:616.00px;font-size:11px;color:#c8c9dc;font-weight:700;letter-spacing:1.302px;left:53.84px;">EVENT STATUS</div>
<div class="t" style="top:644.30px;font-size:14px;color:#dcdcec;letter-spacing:-0.291px;left:70.36px;">Ended</div>
<div class="t" style="top:644.30px;font-size:14px;color:#dcdcec;letter-spacing:-0.427px;left:144.36px;">In Progress</div>
<div class="t" style="top:719.00px;font-size:16px;color:#dedff0;font-weight:700;letter-spacing:0.427px;left:72.84px;">Node</div>
<div class="t" style="top:719.00px;font-size:16px;color:#dedff0;font-weight:700;letter-spacing:0.045px;left:279.84px;">Severity</div>
<div class="t" style="top:719.00px;font-size:16px;color:#dedff0;font-weight:700;letter-spacing:-0.214px;left:486.84px;">Description</div>
<div class="t" style="top:719.00px;font-size:16px;color:#dedff0;font-weight:700;letter-spacing:0.103px;left:1106.84px;">Category</div>
<div class="t" style="top:719.00px;font-size:16px;color:#dedff0;font-weight:700;letter-spacing:0.087px;left:1313.84px;">Start date</div>
<div class="t" style="top:719.00px;font-size:16px;color:#dedff0;font-weight:700;letter-spacing:-0.172px;left:1726.84px;">Duration</div>
<div class="t" style="top:768.00px;font-size:14px;color:#ffffff;font-weight:700;left:-85.50px;width:400px;text-align:center;"><span>A</span></div>
<div class="t" style="top:772.20px;font-size:12px;color:#15172e;font-weight:700;letter-spacing:-0.284px;left:313.18px;">Warning</div>
<div class="t" style="top:769.00px;font-size:16px;color:#dedff0;letter-spacing:0.167px;left:486.34px;">Low memory</div>
<div class="t" style="top:769.00px;font-size:16px;color:#dedff0;letter-spacing:0.360px;left:1106.04px;">Memory</div>
<div class="t" style="top:769.00px;font-size:16px;color:#dedff0;letter-spacing:-0.060px;left:1312.84px;">2 days 8 hours ago</div>
<div class="t" style="top:769.00px;font-size:16px;color:#dedff0;letter-spacing:-0.239px;left:1726.04px;">1 day 6 hours</div>
<div class="t" style="top:818.00px;font-size:14px;color:#ffffff;font-weight:700;left:-85.50px;width:400px;text-align:center;"><span>B</span></div>
<div class="t" style="top:822.20px;font-size:12px;color:#15172e;font-weight:700;letter-spacing:-0.284px;left:313.18px;">Warning</div>
<div class="t" style="top:819.00px;font-size:16px;color:#dedff0;letter-spacing:0.045px;left:486.34px;">Low CPU credits</div>
<div class="t" style="top:819.00px;font-size:16px;color:#dedff0;letter-spacing:-0.700px;left:1106.04px;">CPU</div>
<div class="t" style="top:819.00px;font-size:16px;color:#dedff0;letter-spacing:-0.107px;left:1312.84px;">3 days 5 hours ago</div>
<div class="t" style="top:819.00px;font-size:16px;color:#dedff0;letter-spacing:-0.029px;left:1726.04px;">2 days 4 hours</div>
<div class="t" style="top:867.00px;font-size:14px;color:#ffffff;font-weight:700;left:-85.50px;width:400px;text-align:center;"><span>C</span></div>
<div class="t" style="top:871.20px;font-size:12px;color:#15172e;font-weight:700;letter-spacing:-0.284px;left:313.18px;">Warning</div>
<div class="t" style="top:868.00px;font-size:16px;color:#dedff0;letter-spacing:-0.058px;left:486.34px;">High IO usage</div>
<div class="t" style="top:868.00px;font-size:16px;color:#dedff0;letter-spacing:0.189px;left:1106.04px;">IO</div>
<div class="t" style="top:868.00px;font-size:16px;color:#dedff0;letter-spacing:-0.136px;left:1312.84px;">3 days 3 hours ago</div>
<div class="t" style="top:868.00px;font-size:16px;color:#dedff0;letter-spacing:0.118px;left:1726.04px;">4 hours 55 minutes</div>
<div class="t" style="top:917.00px;font-size:14px;color:#ffffff;font-weight:700;left:-85.50px;width:400px;text-align:center;"><span>A</span></div>
<div class="t" style="top:921.20px;font-size:12px;color:#15172e;font-weight:700;letter-spacing:-0.284px;left:313.18px;">Warning</div>
<div class="t" style="top:918.00px;font-size:16px;color:#dedff0;letter-spacing:0.088px;left:486.34px;">Restarted</div>
<div class="t" style="top:918.00px;font-size:16px;color:#dedff0;letter-spacing:0.217px;left:1106.04px;">Availability</div>
<div class="t" style="top:918.00px;font-size:16px;color:#dedff0;letter-spacing:-0.054px;left:1312.84px;">12 minutes 55 seconds ago</div>
<div class="t" style="top:967.00px;font-size:14px;color:#ffffff;font-weight:700;left:-85.50px;width:400px;text-align:center;"><span>B</span></div>
<div class="t" style="top:971.20px;font-size:12px;color:#15172e;font-weight:700;letter-spacing:-0.371px;left:313.28px;">High</div>
<div class="t" style="top:968.00px;font-size:16px;color:#dedff0;letter-spacing:0.313px;left:486.34px;">Not responding</div>
<div class="t" style="top:968.00px;font-size:16px;color:#dedff0;letter-spacing:0.217px;left:1106.04px;">Availability</div>
<div class="t" style="top:968.00px;font-size:16px;color:#dedff0;letter-spacing:-0.042px;left:1312.84px;">4 days 6 hours ago</div>
<div class="t" style="top:968.00px;font-size:16px;color:#dedff0;letter-spacing:-0.270px;left:1726.04px;">2 days 12 hours</div>
<div class="t" style="top:1016.00px;font-size:14px;color:#ffffff;font-weight:700;left:-85.50px;width:400px;text-align:center;"><span>A</span></div>
<div class="t" style="top:1020.70px;font-size:12px;color:#15172e;font-weight:700;letter-spacing:-0.371px;left:313.28px;">High</div>
<div class="t" style="top:1017.00px;font-size:16px;color:#dedff0;letter-spacing:0.313px;left:486.34px;">Not responding</div>
<div class="t" style="top:1017.00px;font-size:16px;color:#dedff0;letter-spacing:0.217px;left:1106.04px;">Availability</div>
<div class="t" style="top:1017.00px;font-size:16px;color:#dedff0;letter-spacing:-0.111px;left:1312.84px;">6 hours 13 minutes ago</div>
</section>
<section aria-label="Suggestions">
<div class="b" style="left:4px;top:1120px;width:2168px;height:452px;background:#202236;border:1px solid #3a3c52;border-radius:6px;"></div>
<div class="b" style="left:2023px;top:1169px;width:99px;height:30px;background:#65fea5;border-radius:3.5px;"></div>
<div class="b" style="left:54px;top:1245px;width:318px;height:40px;background:#0e1325;border:1px solid #6fcf57;border-radius:4px;"></div>
<div class="b" style="left:334px;top:1254px;width:1px;height:22px;background:#5a5b78;"></div>
<div class="b" style="left:65px;top:1251px;width:40px;height:28px;background:#2b2d45;border-radius:5px;"></div>
<div class="b" style="left:109px;top:1251px;width:39px;height:28px;background:#2b2d45;border-radius:5px;"></div>
<div class="b" style="left:152px;top:1251px;width:41px;height:28px;background:#2b2d45;border-radius:5px;"></div>
<div class="b" style="left:197px;top:1251px;width:40px;height:28px;background:#2b2d45;border-radius:5px;"></div>
<div class="b" style="left:241px;top:1251px;width:39px;height:28px;background:#2b2d45;border-radius:5px;"></div>
<div class="b" style="left:54px;top:1304px;width:246px;height:22px;background:transparent;border:1px solid #3b3c57;border-radius:5px;box-sizing:border-box;"></div>
<div class="b" style="left:307px;top:1304px;width:244px;height:22px;background:transparent;border:1px solid #3b3c57;border-radius:5px;box-sizing:border-box;"></div>
<div class="b" style="left:54px;top:1356px;width:503px;height:168px;background:#0e1325;border:1px solid #4a4c69;border-radius:6px;overflow:hidden;"></div>
<div class="b" style="left:55px;top:1357px;width:501px;height:48px;background:#2c2d46;border-radius:5px 5px 0 0;border-bottom:1px solid #4a4c69"></div>
<div class="b" style="left:55px;top:1487px;width:501px;height:1px;background:#4a4c69;"></div>
<div class="b" style="left:490px;top:1368px;width:54px;height:25px;background:#202236;border:1px solid #5b5d7e;border-radius:12.5px;"></div>
<div class="b" style="left:575px;top:1356px;width:504px;height:168px;background:#0e1325;border:1px solid #4a4c69;border-radius:6px;overflow:hidden;"></div>
<div class="b" style="left:576px;top:1357px;width:502px;height:48px;background:#2c2d46;border-radius:5px 5px 0 0;border-bottom:1px solid #4a4c69"></div>
<div class="b" style="left:576px;top:1487px;width:502px;height:1px;background:#4a4c69;"></div>
<div class="b" style="left:1012px;top:1368px;width:54px;height:25px;background:#202236;border:1px solid #5b5d7e;border-radius:12.5px;"></div>
<div class="b" style="left:1097px;top:1356px;width:504px;height:168px;background:#0e1325;border:1px solid #4a4c69;border-radius:6px;overflow:hidden;"></div>
<div class="b" style="left:1098px;top:1357px;width:502px;height:62px;background:#2c2d46;border-radius:5px 5px 0 0;border-bottom:1px solid #4a4c69"></div>
<div class="b" style="left:1098px;top:1487px;width:502px;height:1px;background:#4a4c69;"></div>
<div class="b" style="left:1534px;top:1375px;width:54px;height:25px;background:#202236;border:1px solid #5b5d7e;border-radius:12.5px;"></div>
<svg class="b" style="left:2036px;top:1176.7px" width="14" height="14" viewBox="0 0 14 14"><path d="M8.09 2.28 A5.1 5.1 0 1 1 3.6 3.7" fill="none" stroke="#15172e" stroke-width="2.1"/><path d="M0.2 0.3 L5.3 0.9 L0.9 5.5 Z" fill="#15172e"/></svg>
<svg class="b" style="left:343px;top:1255.0px" width="20" height="20" viewBox="0 0 20 20"><path d="M4.516 7.548c0.436-0.446 1.043-0.481 1.576 0l3.908 3.747 3.908-3.747c0.533-0.481 1.141-0.446 1.574 0 0.436 0.445 0.408 1.197 0 1.615-0.406 0.418-4.695 4.502-4.695 4.502-0.217 0.223-0.502 0.335-0.787 0.335s-0.57-0.112-0.789-0.335c0 0-4.287-4.084-4.695-4.502s-0.436-1.17 0-1.615z" fill="#6e7090"/></svg>
<svg class="b" style="left:306px;top:1255.0px" width="20" height="20" viewBox="0 0 20 20"><path d="M14.348 14.849c-0.469 0.469-1.229 0.469-1.697 0l-2.651-3.030-2.651 3.029c-0.469 0.469-1.229 0.469-1.697 0-0.469-0.469-0.469-1.229 0-1.697l2.758-3.15-2.759-3.152c-0.469-0.469-0.469-1.228 0-1.697s1.228-0.469 1.697 0l2.652 3.031 2.651-3.031c0.469-0.469 1.228-0.469 1.697 0s0.469 1.229 0 1.697l-2.758 3.152 2.758 3.15c0.469 0.469 0.469 1.229 0 1.698z" fill="#6e7090"/></svg>
<svg class="b" style="left:87px;top:1258.0px" width="14" height="14" viewBox="0 0 20 20"><path d="M14.348 14.849c-0.469 0.469-1.229 0.469-1.697 0l-2.651-3.030-2.651 3.029c-0.469 0.469-1.229 0.469-1.697 0-0.469-0.469-0.469-1.229 0-1.697l2.758-3.15-2.759-3.152c-0.469-0.469-0.469-1.228 0-1.697s1.228-0.469 1.697 0l2.652 3.031 2.651-3.031c0.469-0.469 1.228-0.469 1.697 0s0.469 1.229 0 1.697l-2.758 3.152 2.758 3.15c0.469 0.469 0.469 1.229 0 1.698z" fill="#dcdcec"/></svg>
<svg class="b" style="left:130px;top:1258.0px" width="14" height="14" viewBox="0 0 20 20"><path d="M14.348 14.849c-0.469 0.469-1.229 0.469-1.697 0l-2.651-3.030-2.651 3.029c-0.469 0.469-1.229 0.469-1.697 0-0.469-0.469-0.469-1.229 0-1.697l2.758-3.15-2.759-3.152c-0.469-0.469-0.469-1.228 0-1.697s1.228-0.469 1.697 0l2.652 3.031 2.651-3.031c0.469-0.469 1.228-0.469 1.697 0s0.469 1.229 0 1.697l-2.758 3.152 2.758 3.15c0.469 0.469 0.469 1.229 0 1.698z" fill="#dcdcec"/></svg>
<svg class="b" style="left:175px;top:1258.0px" width="14" height="14" viewBox="0 0 20 20"><path d="M14.348 14.849c-0.469 0.469-1.229 0.469-1.697 0l-2.651-3.030-2.651 3.029c-0.469 0.469-1.229 0.469-1.697 0-0.469-0.469-0.469-1.229 0-1.697l2.758-3.15-2.759-3.152c-0.469-0.469-0.469-1.228 0-1.697s1.228-0.469 1.697 0l2.652 3.031 2.651-3.031c0.469-0.469 1.228-0.469 1.697 0s0.469 1.229 0 1.697l-2.758 3.152 2.758 3.15c0.469 0.469 0.469 1.229 0 1.698z" fill="#dcdcec"/></svg>
<svg class="b" style="left:219px;top:1258.0px" width="14" height="14" viewBox="0 0 20 20"><path d="M14.348 14.849c-0.469 0.469-1.229 0.469-1.697 0l-2.651-3.030-2.651 3.029c-0.469 0.469-1.229 0.469-1.697 0-0.469-0.469-0.469-1.229 0-1.697l2.758-3.15-2.759-3.152c-0.469-0.469-0.469-1.228 0-1.697s1.228-0.469 1.697 0l2.652 3.031 2.651-3.031c0.469-0.469 1.228-0.469 1.697 0s0.469 1.229 0 1.697l-2.758 3.152 2.758 3.15c0.469 0.469 0.469 1.229 0 1.698z" fill="#dcdcec"/></svg>
<svg class="b" style="left:262px;top:1258.0px" width="14" height="14" viewBox="0 0 20 20"><path d="M14.348 14.849c-0.469 0.469-1.229 0.469-1.697 0l-2.651-3.030-2.651 3.029c-0.469 0.469-1.229 0.469-1.697 0-0.469-0.469-0.469-1.229 0-1.697l2.758-3.15-2.759-3.152c-0.469-0.469-0.469-1.228 0-1.697s1.228-0.469 1.697 0l2.652 3.031 2.651-3.031c0.469-0.469 1.228-0.469 1.697 0s0.469 1.229 0 1.697l-2.758 3.152 2.758 3.15c0.469 0.469 0.469 1.229 0 1.698z" fill="#dcdcec"/></svg>
<svg class="b" style="left:499.9px;top:1372.5px" width="13.2" height="14" viewBox="0 0 13.2 14"><polygon points="6.60,0.00 13.20,3.50 13.20,10.50 6.60,14.00 0.00,10.50 0.00,3.50" fill="#54d47e"/></svg>
<svg class="b" style="left:68px;top:1372.3px" width="15" height="15" viewBox="0 0 15 15"><rect x="2.8" y="2.8" width="9.4" height="9.4" rx="1.2" fill="none" stroke="#dedff0" stroke-width="1.3"/><rect x="5.1" y="5.1" width="4.8" height="4.8" fill="#dedff0"/><rect x="5.0" y="0" width="1.2" height="2.4" fill="#dedff0"/><rect x="5.0" y="12.6" width="1.2" height="2.4" fill="#dedff0"/><rect y="5.0" x="0" height="1.2" width="2.4" fill="#dedff0"/><rect y="5.0" x="12.6" height="1.2" width="2.4" fill="#dedff0"/><rect x="8.8" y="0" width="1.2" height="2.4" fill="#dedff0"/><rect x="8.8" y="12.6" width="1.2" height="2.4" fill="#dedff0"/><rect y="8.8" x="0" height="1.2" width="2.4" fill="#dedff0"/><rect y="8.8" x="12.6" height="1.2" width="2.4" fill="#dedff0"/></svg>
<svg class="b" style="left:1021.9px;top:1372.5px" width="13.2" height="14" viewBox="0 0 13.2 14"><polygon points="6.60,0.00 13.20,3.50 13.20,10.50 6.60,14.00 0.00,10.50 0.00,3.50" fill="#54d47e"/></svg>
<svg class="b" style="left:589.5px;top:1374.0px" width="16" height="14" viewBox="0 0 16 14"><rect x="0.6" y="0.8" width="2" height="11.4" fill="#dedff0"/><path d="M3.6 13.4 L7.4 0" stroke="#dedff0" stroke-width="0.9" fill="none"/><ellipse cx="11.3" cy="6.5" rx="2.9" ry="4.9" fill="none" stroke="#dedff0" stroke-width="2"/></svg>
<svg class="b" style="left:1543.9px;top:1379.5px" width="13.2" height="14" viewBox="0 0 13.2 14"><polygon points="6.60,0.00 13.20,3.50 13.20,10.50 6.60,14.00 0.00,10.50 0.00,3.50" fill="#54d47e"/></svg>
<svg class="b" style="left:1112.6px;top:1379.7px" width="14" height="16" viewBox="0 0 14 16"><path d="M0.2 0.4 L8.8 0.4 C12.2 0.4 13.6 2.6 13.6 4.8 C13.6 7 12.2 8.6 10 9 L12.9 15.4 L8.6 15.4 L6.4 10 L6 10 L4.3 15.4 L0.3 15.4 L3.6 6.2 L8.6 6.2 C9.6 6.2 10.1 5.7 10.1 5.1 C10.1 4.5 9.6 4 8.6 4 L2.6 4 Z" fill="#dedff0"/></svg>
<div class="t" style="top:1171.00px;font-size:22px;color:#ffffff;letter-spacing:0.377px;left:53.18px;">Suggestions</div>
<div class="t" style="top:1176.50px;font-size:15px;color:#15172e;letter-spacing:0.353px;left:2063.40px;">Submit</div>
<div class="t" style="top:1228.60px;font-size:11px;color:#c8c9dc;font-weight:700;letter-spacing:1.356px;left:53.84px;">NODE TAGS</div>
<div class="t" style="top:1257.30px;font-size:14px;color:#dcdcec;left:70.36px;">A</div>
<div class="t" style="top:1257.30px;font-size:14px;color:#dcdcec;left:114.36px;">B</div>
<div class="t" style="top:1257.30px;font-size:14px;color:#dcdcec;left:157.36px;">C</div>
<div class="t" style="top:1257.30px;font-size:14px;color:#dcdcec;left:202.36px;">D</div>
<div class="t" style="top:1257.30px;font-size:14px;color:#dcdcec;left:246.36px;">E</div>
<div class="t" style="top:1308.70px;font-size:12px;color:#a3a5bf;letter-spacing:-0.011px;left:61.28px;">Previous month:</div>
<div class="t" style="top:1308.70px;font-size:12.5px;color:#ffffff;letter-spacing:0.200px;left:150.75px;">05/31/2025 - 06/30/2025</div>
<div class="t" style="top:1308.70px;font-size:12px;color:#a3a5bf;letter-spacing:0.155px;left:314.28px;">Current month:</div>
<div class="t" style="top:1308.70px;font-size:12.5px;color:#ffffff;letter-spacing:0.336px;left:399.25px;">06/30/2025 - 07/30/2025</div>
<div class="t" style="top:1372.00px;font-size:14px;color:#ffffff;font-weight:700;left:331.50px;width:400px;text-align:center;"><span>A</span></div>
<div class="t" style="top:1373.00px;font-size:16px;color:#ffffff;letter-spacing:0.135px;left:99.04px;">High IO usage (current month)</div>
<div class="t" style="top:1419.80px;font-size:14px;color:#dedff0;letter-spacing:0.067px;left:65.96px;">Consider upgrading the instance type/disk to increase the IOPS and</div>
<div class="t" style="top:1442.00px;font-size:14px;color:#dedff0;letter-spacing:0.197px;left:65.96px;">throughput limits or optimize usage</div>
<div class="t" style="top:1500.00px;font-size:12px;color:#dedff0;letter-spacing:0.050px;left:66.08px;">Lasted 3 days 12 hours current month (58% of total time)</div>
<div class="t" style="top:1372.00px;font-size:14px;color:#ffffff;font-weight:700;left:853.50px;width:400px;text-align:center;"><span>B</span></div>
<div class="t" style="top:1373.00px;font-size:16px;color:#ffffff;letter-spacing:0.190px;left:621.04px;">High IO usage (month to month)</div>
<div class="t" style="top:1419.80px;font-size:14px;color:#dedff0;letter-spacing:0.067px;left:586.96px;">Consider upgrading the instance type/disk to increase the IOPS and</div>
<div class="t" style="top:1442.00px;font-size:14px;color:#dedff0;letter-spacing:0.197px;left:586.96px;">throughput limits or optimize usage</div>
<div class="t" style="top:1500.00px;font-size:12px;color:#dedff0;letter-spacing:0.122px;left:587.08px;">Increased by 27 percentage points month to month</div>
<div class="t" style="top:1379.00px;font-size:14px;color:#ffffff;font-weight:700;left:1375.50px;width:400px;text-align:center;"><span>C</span></div>
<div class="t" style="top:1369.50px;font-size:16px;color:#ffffff;letter-spacing:0.187px;left:1143.04px;">Server restarted due to Out Of Memory (month to</div>
<div class="t" style="top:1388.60px;font-size:16px;color:#ffffff;letter-spacing:0.657px;left:1143.04px;">month)</div>
<div class="t" style="top:1433.40px;font-size:14px;color:#dedff0;letter-spacing:0.089px;left:1108.96px;">Consider upgrading the instance type to increase the IOPS and throughput</div>
<div class="t" style="top:1455.60px;font-size:14px;color:#dedff0;letter-spacing:0.110px;left:1108.96px;">limits or optimize usage</div>
<div class="t" style="top:1500.00px;font-size:12px;color:#dedff0;letter-spacing:0.172px;left:1109.08px;">3 times more month to month</div>
</section>
</body></html>
